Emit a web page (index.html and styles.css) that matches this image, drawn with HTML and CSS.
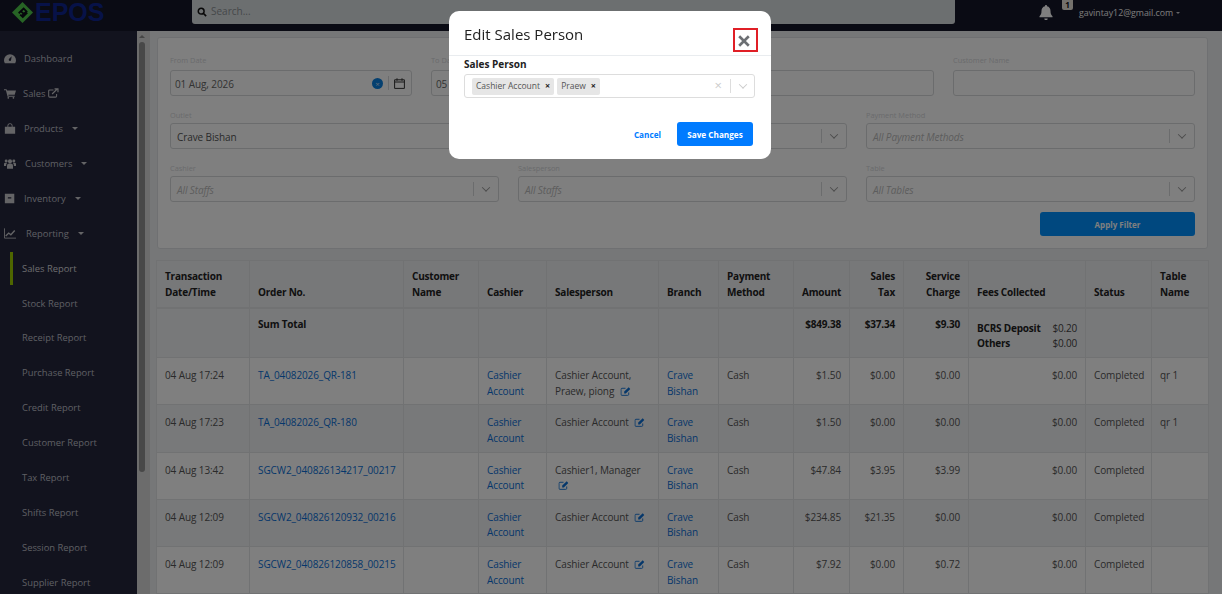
FILE: index.html
```html
<!DOCTYPE html>
<html lang="en">
<head>
<meta charset="utf-8">
<title>Sales Report</title>
<link rel="stylesheet" href="styles.css">
</head>
<body>
<svg class="defs" width="0" height="0" aria-hidden="true">
  <symbol id="edit" viewBox="0 0 16 14"><path d="M13 8.500v3A1.500 1.500 0 0 1 11.500 13h-9A1.500 1.500 0 0 1 1 11.500v-8A1.500 1.500 0 0 1 2.500 2H8" fill="none" stroke="currentColor" stroke-width="1.400"/><path d="M6 7l7-6.500 2.500 2.500-7 7H6z" fill="currentColor"/></symbol>
</svg>
<header class="topbar">
  <div class="logo">
    <svg class="logo-mark" viewBox="0 0 22 22"><path d="M11 0l11 11-11 11L0 11z" fill="#4fc84a"/><path d="M7 11.800l5.200-5 3 3-5.200 4.800M8.600 13.200l2.700 2.600 4.700-4.600M9.500 9.800l3 3" fill="none" stroke="#0b0c16" stroke-width="1.900"/></svg>
    <span class="logo-text">EPOS</span>
  </div>
  <div class="search">
    <svg class="search-icon" viewBox="0 0 12 12"><circle cx="5" cy="5" r="3.500" fill="none" stroke="#111" stroke-width="1.800"/><path d="M7.500 7.500L11 11" stroke="#111" stroke-width="2"/></svg>
    <span>Search...</span>
  </div>
  <div class="user">
    <svg class="bell" viewBox="0 0 14 15"><path d="M7 0a1 1 0 0 1 1 1.200c2.300.5 3.500 2.300 3.500 4.800 0 3 .8 4 2 5.300v1H.5v-1c1.200-1.300 2-2.300 2-5.300 0-2.500 1.200-4.300 3.500-4.800A1 1 0 0 1 7 0zM5.300 13.500h3.400a1.700 1.700 0 0 1-3.400 0z" fill="#fff"/></svg>
    <span class="badge">1</span>
    <span class="email">gavintay12@gmail.com</span>
    <span class="caret small"></span>
  </div>
</header>
<div class="layout">
  <nav class="sidebar">
    <a class="nav-item"><svg class="nav-icon" viewBox="0 0 14 12"><path d="M7 1a7 7 0 0 0-7 7c0 1.300.3 2.500 1 3.500h12c.7-1 1-2.200 1-3.500a7 7 0 0 0-7-7zm0 8a1.500 1.500 0 0 1-1-2.600L9 3.500 8.300 7.500A1.500 1.500 0 0 1 7 9z"/></svg><span class="nav-label">Dashboard</span></a>
    <a class="nav-item"><svg class="nav-icon" viewBox="0 0 14 12"><path d="M0 1h3l.5 1.500H14l-1.500 5H5l.3 1H12.500v1.200H4.200L2.200 2.200H0z"/><circle cx="5" cy="11" r="1"/><circle cx="11" cy="11" r="1"/></svg><span class="nav-label tight">Sales</span><svg class="nav-ext" viewBox="0 0 16 14"><path d="M12.500 8.500v3A1.500 1.500 0 0 1 11 13H2.500A1.500 1.500 0 0 1 1 11.500V4a1.500 1.500 0 0 1 1.500-1.500H8" fill="none" stroke="currentColor" stroke-width="1.500"/><path d="M6 8.500l7-7M9.500 1h5v5" fill="none" stroke="currentColor" stroke-width="1.700"/></svg></a>
    <a class="nav-item"><svg class="nav-icon" viewBox="0 0 14 12"><path d="M1 4h3V2.800a3 3 0 0 1 6 0V4h3v8H1zm4 0h4V2.800a2 2 0 0 0-4 0z"/></svg><span class="nav-label">Products</span><span class="caret"></span></a>
    <a class="nav-item"><svg class="nav-icon" viewBox="0 0 14 12"><circle cx="7" cy="3.500" r="2.400"/><circle cx="2.500" cy="3" r="1.700"/><circle cx="11.500" cy="3" r="1.700"/><path d="M3.500 12V8.500A2.500 2.500 0 0 1 6 6h2a2.500 2.500 0 0 1 2.500 2.500V12zM0 9V6.500A1.500 1.500 0 0 1 1.500 5h1.800c.3 0 .3.500.1.800-.5.500-.9 1.200-.9 2V9zM14 9V6.500A1.500 1.500 0 0 0 12.500 5h-1.800c-.3 0-.3.500-.1.800.5.500.9 1.200.9 2V9z"/></svg><span class="nav-label wide">Customers</span><span class="caret"></span></a>
    <a class="nav-item"><svg class="nav-icon" viewBox="0 0 14 12"><path d="M1 .5h11v11H1zM4.500 4.500v1.500h4V4.500z" fill-rule="evenodd"/></svg><span class="nav-label">Inventory</span><span class="caret"></span></a>
    <a class="nav-item"><svg class="nav-icon chart" viewBox="0 0 14 12"><path d="M.6 0v11.400H14" fill="none" stroke="currentColor" stroke-width="1"/><path d="M2 9l3.500-3.500 2.500 2 4.500-5" fill="none" stroke="currentColor" stroke-width="1.600"/></svg><span class="nav-label wider">Reporting</span><span class="caret"></span></a>
    <a class="sub-item active">Sales Report</a>
    <a class="sub-item">Stock Report</a>
    <a class="sub-item">Receipt Report</a>
    <a class="sub-item">Purchase Report</a>
    <a class="sub-item">Credit Report</a>
    <a class="sub-item">Customer Report</a>
    <a class="sub-item">Tax Report</a>
    <a class="sub-item">Shifts Report</a>
    <a class="sub-item">Session Report</a>
    <a class="sub-item">Supplier Report</a>
  </nav>
  <div class="scrollbar"><span class="scroll-up"></span><span class="scroll-thumb"></span></div>
  <main class="content">
    <section class="filters">
      <div class="row row-four">
        <div class="field"><label>From Date</label>
          <div class="control"><span class="value narrow">01 Aug, 2026</span><span class="clear-dot">×</span><span class="sep"></span>
            <svg class="cal" viewBox="0 0 11 11"><path d="M.6 1.800h9.800v8.600H.6zM.6 4h9.800M3 .3v2.500M8 .3v2.500" fill="none" stroke="#333" stroke-width="1"/></svg></div></div>
        <div class="field"><label>To Date</label>
          <div class="control"><span class="value narrow">05 Aug, 2026</span></div></div>
        <div class="field"><label>Order No.</label><div class="control"></div></div>
        <div class="field"><label>Customer Name</label><div class="control"></div></div>
      </div>
      <div class="row row-three">
        <div class="field"><label>Outlet</label><div class="control"><span class="value">Crave Bishan</span><span class="sep push"></span><span class="chev"></span></div></div>
        <div class="field"><label>Branch</label><div class="control"><span class="value ph">All Branches</span><span class="sep push"></span><span class="chev"></span></div></div>
        <div class="field"><label>Payment Method</label><div class="control"><span class="value ph">All Payment Methods</span><span class="sep push"></span><span class="chev"></span></div></div>
      </div>
      <div class="row row-three">
        <div class="field"><label>Cashier</label><div class="control"><span class="value ph">All Staffs</span><span class="sep push"></span><span class="chev"></span></div></div>
        <div class="field"><label>Salesperson</label><div class="control"><span class="value ph">All Staffs</span><span class="sep push"></span><span class="chev"></span></div></div>
        <div class="field"><label>Table</label><div class="control"><span class="value ph">All Tables</span><span class="sep push"></span><span class="chev"></span></div></div>
      </div>
      <div class="actions"><button class="apply">Apply Filter</button></div>
    </section>
    <table class="report">
      <colgroup>
        <col class="c1"><col class="c2"><col class="c3"><col class="c4"><col class="c5"><col class="c6"><col class="c7"><col class="c8"><col class="c9"><col class="c10"><col class="c11"><col class="c12"><col class="c13">
      </colgroup>
      <thead>
        <tr><th>Transaction Date/Time</th><th>Order No.</th><th>Customer Name</th><th>Cashier</th><th>Salesperson</th><th>Branch</th><th>Payment Method</th><th class="num">Amount</th><th class="num">Sales Tax</th><th class="num">Service Charge</th><th>Fees Collected</th><th>Status</th><th>Table Name</th></tr>
      </thead>
      <tbody>
        <tr class="sum"><td></td><td>Sum Total</td><td></td><td></td><td></td><td></td><td></td><td class="num">$849.38</td><td class="num">$37.34</td><td class="num">$9.30</td>
          <td class="fees"><div class="fee"><span>BCRS Deposit</span><span class="plain">$0.20</span></div><div class="fee"><span>Others</span><span class="plain">$0.00</span></div></td><td></td><td></td></tr>
        <tr><td>04 Aug 17:24</td><td><a>TA_04082026_QR-181</a></td><td></td><td><a>Cashier Account</a></td><td>Cashier Account, Praew, piong <svg class="edit" viewBox="0 0 16 14"><use href="#edit"/></svg></td><td><a>Crave Bishan</a></td><td>Cash</td><td class="num">$1.50</td><td class="num">$0.00</td><td class="num">$0.00</td><td class="num">$0.00</td><td>Completed</td><td>qr 1</td></tr>
        <tr><td>04 Aug 17:23</td><td><a>TA_04082026_QR-180</a></td><td></td><td><a>Cashier Account</a></td><td>Cashier Account <svg class="edit" viewBox="0 0 16 14"><use href="#edit"/></svg></td><td><a>Crave Bishan</a></td><td>Cash</td><td class="num">$1.50</td><td class="num">$0.00</td><td class="num">$0.00</td><td class="num">$0.00</td><td>Completed</td><td>qr 1</td></tr>
        <tr><td>04 Aug 13:42</td><td><a>SGCW2_040826134217_00217</a></td><td></td><td><a>Cashier Account</a></td><td>Cashier1, Manager <svg class="edit" viewBox="0 0 16 14"><use href="#edit"/></svg></td><td><a>Crave Bishan</a></td><td>Cash</td><td class="num">$47.84</td><td class="num">$3.95</td><td class="num">$3.99</td><td class="num">$0.00</td><td>Completed</td><td></td></tr>
        <tr><td>04 Aug 12:09</td><td><a>SGCW2_040826120932_00216</a></td><td></td><td><a>Cashier Account</a></td><td>Cashier Account <svg class="edit" viewBox="0 0 16 14"><use href="#edit"/></svg></td><td><a>Crave Bishan</a></td><td>Cash</td><td class="num">$234.85</td><td class="num">$21.35</td><td class="num">$0.00</td><td class="num">$0.00</td><td>Completed</td><td></td></tr>
        <tr><td>04 Aug 12:09</td><td><a>SGCW2_040826120858_00215</a></td><td></td><td><a>Cashier Account</a></td><td>Cashier Account <svg class="edit" viewBox="0 0 16 14"><use href="#edit"/></svg></td><td><a>Crave Bishan</a></td><td>Cash</td><td class="num">$7.92</td><td class="num">$0.00</td><td class="num">$0.72</td><td class="num">$0.00</td><td>Completed</td><td></td></tr>
      </tbody>
    </table>
  </main>
</div>
<div class="overlay">
  <div class="modal">
    <div class="modal-head">
      <h2>Edit Sales Person</h2>
      <button class="close" aria-label="Close"><svg viewBox="0 0 10 10"><path d="M1 1l8 8M9 1L1 9" stroke="#6c6f73" stroke-width="2.200"/></svg></button>
    </div>
    <div class="modal-body">
      <label class="modal-label">Sales Person</label>
      <div class="multi">
        <span class="chip">Cashier Account<i>×</i></span>
        <span class="chip">Praew<i>×</i></span>
        <span class="multi-x">×</span><span class="multi-sep"></span><span class="chev light"></span>
      </div>
    </div>
    <div class="modal-foot">
      <button class="cancel">Cancel</button>
      <button class="save">Save Changes</button>
    </div>
  </div>
</div>
</body>
</html>
```
FILE: styles.css
```css
* { box-sizing: border-box; }
html, body { margin: 0; height: 100%; overflow: hidden; }
body { font-family: "Open Sans", "Noto Sans", sans-serif; font-size: 10px; line-height: 15.6px; letter-spacing: -.1px; color: #555; background: #eceef1; }
.defs { position: absolute; }

.topbar { height: 31px; background: #141628; display: flex; align-items: flex-start; color: #fff; letter-spacing: 0; }
.logo { width: 192px; height: 24px; display: flex; align-items: center; padding-left: 12px; }
.logo-mark { width: 21px; height: 21px; flex: none; }
.logo-text { font-family: "Liberation Sans", sans-serif; font-size: 25px; line-height: 24px; font-weight: 700; color: #0e2590; margin-left: 2px; }
.search { width: 763px; height: 24px; background: #d9dee1; border-radius: 0 0 3px 3px; display: flex; align-items: center; padding-left: 5px; color: #8b9194; font-size: 10px; }
.search-icon { width: 10px; height: 10px; margin-right: 4px; }
.user { display: flex; align-items: flex-start; margin-left: 84px; position: relative; }
.bell { width: 14px; height: 15px; margin: 5px 0 0 0; }
.badge { width: 11px; height: 10px; background: #e8e2d8; color: #111; border-radius: 0 0 2px 2px; font-size: 8px; font-weight: 700; line-height: 10px; text-align: center; margin-left: 9px; }
.email { font-size: 8.8px; line-height: 13px; margin: 7px 0 0 6px; color: #f4f4f4; }
.caret { display: inline-block; border: 3px solid transparent; border-top-color: #c8c8cc; border-bottom: 0; margin-left: 9px; }
.caret.small { border-width: 2.500px; border-bottom: 0; margin: 12px 0 0 3px; }

.layout { display: flex; height: 563px; }
.sidebar { width: 137px; flex: none; background: #24263c; padding-top: 10px; overflow: hidden; color: #bdbec6; font-size: 9.4px; letter-spacing: 0; }
.nav-item { height: 35px; display: flex; align-items: center; padding-left: 4px; }
.nav-icon { width: 12px; height: 11px; flex: none; fill: #c8c8cc; color: #c8c8cc; }
.nav-label { margin-left: 8px; }
.nav-label.tight { margin-left: 7px; }
.nav-label.wide { margin-left: 9px; }
.nav-label.wider { margin-left: 10px; }
.nav-ext { width: 11px; height: 10px; margin: -2px 0 0 3px; color: #c8c8cc; }
.sub-item { height: 34.900px; display: flex; align-items: center; padding-left: 22px; position: relative; }
.sub-item.active { color: #d8d8dc; }
.sub-item.active::before { content: ""; position: absolute; left: 10px; top: 1px; width: 3px; height: 33px; background: #9ccc00; }

.scrollbar { width: 13px; flex: none; background: #d9d9d9; display: flex; flex-direction: column; align-items: center; padding-top: 4px; }
.scroll-up { border: 3px solid transparent; border-bottom-color: #8a8a8a; border-top: 0; margin: 0 3px 4px 0; }
.scroll-thumb { width: 6px; height: 430px; background: #909090; border-radius: 3px; margin-right: 3px; }

.content { flex: 1; min-width: 0; padding: 6px 13px 0 7px; overflow: hidden; }
.filters { height: 212px; width: 1051px; background: #fff; border: 1px solid #dfe1e4; border-radius: 3px; padding: 17px 12px 0; }
.row { display: grid; gap: 19px; }
.row-four { grid-template-columns: repeat(4, 242px); }
.row-three { grid-template-columns: repeat(3, 329px); }
.field label { display: block; font-size: 7.4px; line-height: 10px; height: 15px; color: #d4d6d9; letter-spacing: 0; }
.row + .row label { padding-top: 2px; }
.control { height: 26px; border: 1px solid #d6d8da; border-radius: 3px; display: flex; align-items: center; padding: 0 6px; color: #555; }
.row + .row { margin-top: 12px; }
.value { margin-top: 3px; }
.value.narrow { color: #666; margin-left: -2px; }
.value.ph { font-style: italic; color: #bbb; }
.clear-dot { margin-left: auto; width: 11px; height: 11px; border-radius: 50%; background: #0a80e0; color: #c7def5; font-size: 8px; line-height: 11px; text-align: center; }
.sep { width: 1px; height: 14px; background: #d6d8da; margin: 0 5px; }
.sep.push { margin-left: auto; margin-right: 9px; }
.cal { width: 11px; height: 11px; }
.chev { width: 6px; height: 6px; border-right: 1.200px solid #999; border-bottom: 1.200px solid #999; transform: rotate(45deg) translate(-1px, -1px); margin-right: 3px; }
.chev.light { border-color: #ccc; margin-right: 0; }
.actions { display: flex; justify-content: flex-end; margin-top: 10px; }
.apply { width: 155px; height: 24px; border: 0; border-radius: 3px; background: #0090ff; color: #fff; font: 700 8px "Open Sans", sans-serif; }

.report { width: 1052px; margin: 11px 0 0 -1px; border-collapse: collapse; table-layout: fixed; background: #fff; }
.report th, .report td { border: 1px solid #e3e4e6; padding: 10px 8px 5px; vertical-align: top; }
.report th { vertical-align: bottom; background: #eff0f2; color: #222; font-weight: 700; letter-spacing: -.2px; text-align: left; border-bottom-width: 2px; padding: 8px 8px 6.500px; }
.report tbody tr:nth-child(odd) { background: #f1f2f4; }
.report .num { text-align: right; }
.report a { color: #0a6fd6; }
.report .sum td { color: #222; font-weight: 700; letter-spacing: -.2px; height: 50px; padding-top: 8px; padding-bottom: 4px; }
.report .sum .fees { padding-top: 12px; }
.fee { display: flex; justify-content: space-between; }
.plain { font-weight: 400; color: #444; }
.edit { width: 11px; height: 9px; margin-left: 3px; color: #0a6fd6; vertical-align: -1px; }
.c1 { width: 93px; } .c2 { width: 154px; } .c3 { width: 75px; } .c4 { width: 68px; } .c5 { width: 112px; }
.c6 { width: 60px; } .c7 { width: 75px; } .c8 { width: 56px; } .c9 { width: 54px; } .c10 { width: 65px; }
.c11 { width: 117px; } .c12 { width: 66px; } .c13 { width: 57px; }

.overlay { position: fixed; inset: 0; background: rgba(0, 0, 0, .5); letter-spacing: 0; }
.modal { position: absolute; left: 449px; top: 11px; width: 322px; height: 148px; background: #fff; border-radius: 10px; }
.modal-head { height: 45px; border-bottom: 1px solid #e9ecef; position: relative; padding: 13px 15px 0; }
.modal-head h2 { margin: 0; font-size: 15px; line-height: 20px; color: #222; font-weight: 500; }
.close { position: absolute; left: 284px; top: 17px; width: 25px; height: 24px; padding: 0 3px 0 0; background: none; border: 2px solid #e01f26; display: flex; align-items: center; justify-content: center; }
.close svg { width: 12px; height: 12px; margin-top: 1px; }
.modal-body { padding: 1px 16px 0 15px; }
.modal-label { display: block; font-weight: 700; color: #222; line-height: 15px; font-size: 10px; }
.multi { margin-top: 2px; height: 24px; border: 1px solid #ddd; border-radius: 3px; display: flex; align-items: center; padding: 0 8px 0 7px; gap: 3px; }
.chip { height: 17px; background: #e6e6e6; border-radius: 2px; display: flex; align-items: center; padding: 0 4px; font-size: 8.5px; color: #555; }
.chip i { font-style: normal; font-weight: 700; color: #222; margin-left: 5px; font-size: 9px; }
.multi-x { margin-left: auto; color: #ccc; font-size: 13px; }
.multi-sep { width: 1px; height: 14px; background: #ddd; margin: 0 6px 0 5px; }
.modal-foot { display: flex; justify-content: flex-end; align-items: center; padding: 24px 18px 0 0; }
.cancel { background: none; border: 0; padding: 0; color: #007bff; font: 700 8.200px "Open Sans", sans-serif; margin-right: 16px; }
.save { width: 76px; height: 24px; background: #007bff; color: #fff; border: 0; border-radius: 3px; font: 700 8.200px "Open Sans", sans-serif; padding: 0; }
```
